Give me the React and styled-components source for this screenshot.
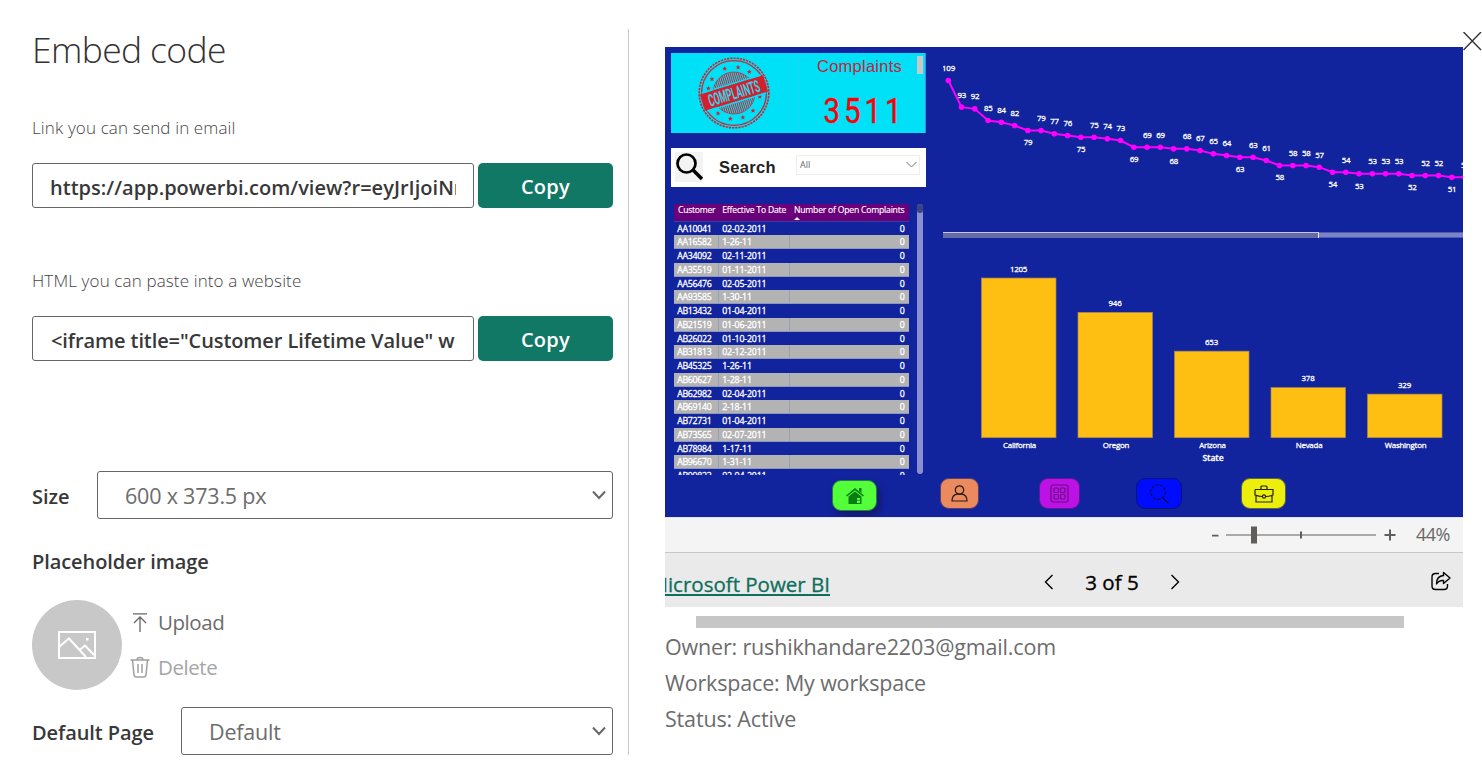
import React from 'react';
import styled, { createGlobalStyle } from 'styled-components';

const UI = '"Open Sans", "Noto Sans", sans-serif';

const GlobalStyle = createGlobalStyle`
  * { box-sizing: border-box; }
  body {
    margin: 0;
    background: #fff;
    font-family: ${UI};
    overflow: hidden;
  }
`;

/* ---------- dialog ---------- */

const Dialog = styled.div`
  position: relative;
  display: flex;
  width: 1482px;
  height: 762px;
  overflow: hidden;
  background: #fff;
`;

const Settings = styled.section`
  display: flex;
  flex-direction: column;
  width: 629px;
  height: 726px;
  margin-top: 29px;
  padding: 0 15px 0 32px;
  border-right: 1px solid #c8c8c8;
`;

const Title = styled.h1`
  margin: 0;
  height: 42px;
  font-size: 35.5px;
  line-height: 40px;
  font-weight: 300;
  letter-spacing: -0.65px;
  color: #333;
`;

const Caption = styled.div`
  height: 24px;
  margin-top: ${(p) => p.$top}px;
  font-size: 17px;
  line-height: 24px;
  font-weight: 300;
  letter-spacing: 0.13px;
  color: #444;
`;

const CopyRow = styled.div`
  display: flex;
  gap: 4px;
  height: 45px;
  margin-top: 23px;
`;

const CodeBox = styled.div`
  width: 442px;
  border: 1px solid #666;
  border-radius: 3px;
  padding: 0 17px;
`;

const CodeText = styled.div`
  overflow: hidden;
  white-space: pre;
  padding-left: ${(p) => p.$indent || 0}px;
  font-size: 20px;
  line-height: 45px;
  padding-top: 1px;
  height: 43px;
  font-weight: 600;
  letter-spacing: ${(p) => p.$track}px;
  color: #383838;
`;

const CopyButton = styled.button`
  width: 135px;
  border: 0;
  border-radius: 5px;
  padding: 2px 0 0 0;
  background: #117865;
  color: #fff;
  font: 600 20px/43px ${UI};
  letter-spacing: 0.3px;
`;

const FieldRow = styled.div`
  display: flex;
  align-items: center;
  justify-content: space-between;
  height: 48px;
  margin-top: ${(p) => p.$top}px;
`;

const Label = styled.div`
  font-size: 20px;
  line-height: 28px;
  font-weight: 600;
  letter-spacing: -0.08px;
  color: #383838;
  padding-top: ${(p) => p.$top || 0}px;
`;

const Select = styled.div`
  display: flex;
  align-items: center;
  justify-content: space-between;
  width: ${(p) => p.$width}px;
  height: 48px;
  padding: 2px 5px 0 27px;
  border: 1px solid #666;
  border-radius: 3px;
  font-size: 21.5px;
  letter-spacing: -0.2px;
  color: #6c6c6c;
  line-height: 46px;
`;

const ImageRow = styled.div`
  display: flex;
  height: 90px;
  margin-top: 24px;
`;

const Avatar = styled.div`
  display: grid;
  place-items: center;
  width: 90px;
  height: 90px;
  border-radius: 50%;
  background: #c8c8c8;
`;

const Actions = styled.div`
  display: flex;
  flex-direction: column;
  gap: 17px;
  padding: 8px 0 0 8px;
`;

const Action = styled.div`
  display: flex;
  align-items: center;
  gap: 8px;
  height: 28px;
  font-size: 20.5px;
  line-height: 28px;
  letter-spacing: -0.45px;
  color: ${(p) => (p.$disabled ? '#a6a6a6' : '#6c6c6c')};
`;

/* ---------- preview ---------- */

const Preview = styled.section`
  width: 798px;
  margin: 47px 0 0 36px;
`;

const Close = styled.svg`
  position: absolute;
  left: 1463px;
  top: 32px;
`;

const Report = styled.div`
  width: 798px;
  height: 470px;
  background: #12239e;
  overflow: hidden;
`;

const ReportBody = styled.div`
  display: flex;
  height: 428px;
`;

const ReportLeft = styled.div`
  display: flex;
  flex-direction: column;
  width: 261px;
  padding: 6px 0 0 6px;
`;

const ComplaintsCard = styled.div`
  display: flex;
  height: 80px;
  background: #00e0f7;
  border-right: 1px solid #4a86d8;
`;

const StampCell = styled.div`
  width: 128px;
  padding: 2px 0 0 25px;
  border-right: 1px solid #22d3f5;
`;

const Count = styled.div`
  width: 126px;
  text-align: center;
`;

const CountTitle = styled.div`
  display: flex;
  justify-content: space-between;
  height: 27px;
  padding: 3px 2px 0 18px;
  font: 16.5px/21px "Liberation Sans", Arial, sans-serif;
  letter-spacing: 0.25px;
  color: #c4243c;
`;

const CountThumb = styled.span`
  width: 6px;
  height: 18px;
  background: #c8c8c8;
`;

const CountValue = styled.div`
  padding-left: 6px;
  font: 34.5px/62px Roboto, sans-serif;
  letter-spacing: 4.7px;
  color: #fb0007;
  -webkit-text-stroke: 0.4px #fb0007;
  transform: scaleX(0.85);
`;

const SearchCard = styled.div`
  display: flex;
  align-items: center;
  height: 39px;
  margin-top: 14.5px;
  padding: 0 6px 0 4px;
  background: #fff;
`;

const GlassTile = styled.div`
  width: 28px;
  height: 30px;
  background: #f3f3f3;
`;

const SearchLabel = styled.div`
  width: 93px;
  padding-left: 16px;
  font: bold 16.5px/24px "Liberation Sans", Arial, sans-serif;
  letter-spacing: 0.3px;
  color: #222;
`;

const Slicer = styled.div`
  display: flex;
  align-items: center;
  justify-content: space-between;
  width: 124px;
  height: 20px;
  margin-top: -5px;
  padding: 0 2px 0 3px;
  border: 1px solid #eee;
  font-size: 9px;
  color: #666;
`;

const TableArea = styled.div`
  display: flex;
  justify-content: space-between;
  height: 271px;
  margin-top: 17px;
  padding: 0 3px 0 3px;
`;

const Table = styled.div`
  width: 235px;
  height: 271px;
  overflow: hidden;
`;

const gridColumns = '45px 71px 119px';

const HeaderRow = styled.div`
  display: grid;
  grid-template-columns: ${gridColumns};
  height: 18px;
  background: #6b007b;
  border-bottom: 1px solid #34409f;
  font-size: 8.6px;
  line-height: 12.5px;
  color: #fff;
  -webkit-text-stroke: 0.15px #fff;
  white-space: nowrap;
`;

const HeaderCell = styled.div`
  position: relative;
  padding-left: ${(p) => p.$indent}px;
  letter-spacing: ${(p) => p.$track}px;
`;

const SortMark = styled.svg`
  position: absolute;
  left: 4px;
  top: 13px;
`;

const DataRow = styled.div`
  display: grid;
  grid-template-columns: ${gridColumns};
  height: 13.75px;
  font-size: 8.8px;
  line-height: 15px;
  letter-spacing: -0.17px;
  color: #fff;
  -webkit-text-stroke: 0.3px #fff;

  &:nth-child(odd) {
    background: #b3b3b3;
    border-bottom: 1px solid #8e97c0;
  }
`;

const Cell = styled.div`
  height: 12.75px;
  padding: 0 4.5px 0 3.2px;
  text-align: ${(p) => (p.$right ? 'right' : 'left')};
  letter-spacing: ${(p) => (p.$tight ? '-0.28px' : 'inherit')};

  ${DataRow}:nth-child(odd) &:not(:last-child) {
    border-right: 1px solid #9a9fb8;
  }
`;

const TableTrack = styled.div`
  width: 6px;
  height: 270px;
  border-radius: 3px;
  background: #8890cf;
`;

const TableThumb = styled.div`
  height: 9px;
  border-radius: 3px;
  background: #3b4385;
`;

const ReportRight = styled.div`
  display: flex;
  flex-direction: column;
  width: 537px;
  padding-left: 17px;
`;

const ChartScroll = styled.div`
  display: flex;
  height: 6px;
`;

const ChartThumb = styled.div`
  width: 376px;
  background: #666ba6;
  border-top: 1px solid #c3c6e4;
  border-right: 1px solid #e8e8f4;
`;

const ChartTrack = styled.div`
  flex: 1;
  background: #7c84c8;
  border-top: 1px solid #4f5ab4;
  border-bottom: 1px solid #4f5ab4;
`;

const NavRow = styled.div`
  display: flex;
  align-items: flex-start;
  padding: 3px 0 0 167px;
`;

const NavButton = styled.div`
  display: grid;
  place-items: center;
  width: ${(p) => p.$width}px;
  height: 31px;
  margin-left: ${(p) => p.$gap || 0}px;
  margin-top: ${(p) => p.$drop || 0}px;
  border-radius: 9px;
  border: 1px solid ${(p) => p.$edge};
  background: ${(p) => p.$fill};
  box-shadow: ${(p) => (p.$raised ? '3px 4px 6px rgba(20, 20, 60, 0.6)' : 'none')};
`;

const ZoomBar = styled.div`
  display: flex;
  align-items: center;
  justify-content: flex-end;
  height: 36px;
  padding-right: 13px;
  background: #f4f4f4;
  border-top: 1px solid #e4e4ee;
  border-bottom: 1px solid #c8c8c8;
  font-size: 18px;
  color: #6a6866;
`;

const ZoomPercent = styled.span`
  margin: -2px 0 0 18px;
  letter-spacing: -0.45px;
`;

const PageBar = styled.div`
  display: flex;
  align-items: center;
  height: 54px;
  overflow: hidden;
  background: #eaeaea;
  color: #000;
  font-size: 20.5px;
`;

const Brand = styled.a`
  width: 165px;
  height: 34px;
  margin-top: 11px;
  display: flex;
  justify-content: flex-end;
  white-space: nowrap;
  color: #0f6e5d;
  -webkit-text-stroke: 0.3px #0f6e5d;
  line-height: 30px;
  text-decoration: underline;
  text-decoration-thickness: 2px;
  text-underline-offset: 2px;
`;

const Pager = styled.div`
  display: flex;
  align-items: center;
  justify-content: space-between;
  width: 138px;
  margin-left: 213px;
  margin-top: 3px;
`;

const PageCount = styled.span`
  -webkit-text-stroke: 0.35px #000;
  letter-spacing: 0;
`;

const Share = styled.svg`
  margin: 2px 0 0 250px;
`;

const PreviewScroll = styled.div`
  width: 708px;
  height: 12px;
  margin: 9px 0 0 31px;
  background: #c6c6c6;
`;

const Facts = styled.div`
  margin-top: 1px;
`;

const Fact = styled.div`
  height: 36px;
  font-size: 21.5px;
  line-height: 36px;
  letter-spacing: -0.17px;
  color: #6c6c6c;
`;

/* ---------- data ---------- */

const rows = [
  ['AA10041', '02-02-2011'], ['AA16582', '1-26-11'], ['AA34092', '02-11-2011'],
  ['AA35519', '01-11-2011'], ['AA56476', '02-05-2011'], ['AA93585', '1-30-11'],
  ['AB13432', '01-04-2011'], ['AB21519', '01-06-2011'], ['AB26022', '01-10-2011'],
  ['AB31813', '02-12-2011'], ['AB45325', '1-26-11'], ['AB60627', '1-28-11'],
  ['AB62982', '02-04-2011'], ['AB69140', '2-18-11'], ['AB72731', '01-04-2011'],
  ['AB73565', '02-07-2011'], ['AB78984', '1-17-11'], ['AB96670', '1-31-11'],
  ['AB99823', '02-04-2011'],
];

const trend = [109, 93, 92, 85, 84, 82, 79, 79, 77, 76, 75, 75, 74, 73, 69, 69, 69, 68, 68, 67,
  65, 64, 63, 63, 61, 58, 58, 58, 57, 54, 54, 53, 53, 53, 53, 52, 52, 52, 51, 51];
const labelsBelow = [6, 10, 14, 17, 22, 25, 29, 31, 35, 38];

const states = [['California', 1205], ['Oregon', 946], ['Arizona', 653], ['Nevada', 378], ['Washington', 329]];

/* ---------- drawings ---------- */

const ChartText = styled.text`
  font-family: ${UI};
  font-size: 7.9px;
  letter-spacing: -0.22px;
  text-anchor: middle;
  fill: #fff;
  stroke: #fff;
  stroke-width: 0.3px;
`;

const AxisTitle = styled(ChartText)`
  font-size: 8.5px;
  font-weight: 600;
  letter-spacing: 0;
`;

function Chevron() {
  return (
    <svg width="16" height="10" viewBox="0 0 16 10" fill="none">
      <path d="M2 .5 8 7l6-6.500" stroke="#666" strokeWidth="2" />
    </svg>
  );
}

function star(cx, cy, r) {
  return Array.from({ length: 10 }, (_, i) => {
    const a = (Math.PI / 5) * i - Math.PI / 2;
    const k = i % 2 ? r * 0.42 : r;
    return `${cx + k * Math.cos(a)},${cy + k * Math.sin(a)}`;
  }).join(' ');
}

function Stamp() {
  const red = '#d4202e';
  const angles = [-148, -111, -81, -54, 8, 43, 70, 98, 128, 190];
  return (
    <svg width="76" height="76" viewBox="-38 -38 76 76">
      <circle r="34.8" fill="none" stroke={red} strokeWidth="1.6" strokeDasharray="2.2 1" />
      <circle r="32.4" fill="none" stroke={red} strokeWidth="1.3" />
      {angles.map((a) => (
        <polygon key={a} fill={red} points={star(26 * Math.cos((a * Math.PI) / 180), 26 * Math.sin((a * Math.PI) / 180), 2.6)} />
      ))}
      <g transform="rotate(-17)">
        <circle r="21" fill="none" stroke={red} strokeWidth="0.6" />
        {Array.from({ length: 21 }, (_, i) => {
          const x = -20 + i * 2;
          const h = Math.sqrt(441 - x * x);
          return <line key={x} x1={x} x2={x} y1={-h} y2={h} stroke={red} strokeWidth="0.9" />;
        })}
        <path d="M-33-8.500H33V8.500H-33Z" fill={red} />
        <path d="M-31-9.500H31M-31 9.500H31" stroke="#00e0f7" strokeWidth="1.300" />
        <text x="-26.500" y="6.200" fontFamily="Roboto, sans-serif" fontWeight="700" fontSize="17" fill="#2fd5ea" textLength="53" lengthAdjust="spacingAndGlyphs">COMPLAINTS</text>
      </g>
    </svg>
  );
}

function TrendChart() {
  const px = (i) => 5.3 + i * 13.25;
  const py = (v) => 33.5 + (109 - v) * 1.667;
  return (
    <svg width="520" height="185" viewBox="0 0 520 185">
      <polyline fill="none" stroke="#f0f" strokeWidth="2" points={trend.map((v, i) => `${px(i)},${py(v)}`).join(' ')} />
      {trend.map((v, i) => (
        <g key={i}>
          <circle cx={px(i)} cy={py(v)} r="2.800" fill="#f0f" />
          <ChartText x={px(i) + 0.2} y={py(v) + (labelsBelow.includes(i) ? 14.8 : -9.4)}>{v}</ChartText>
        </g>
      ))}
    </svg>
  );
}

function StateChart() {
  return (
    <svg width="520" height="237" viewBox="0 191 520 237">
      {states.map(([name, v], i) => {
        const x = 38.5 + i * 96.5;
        const h = v * 0.1325;
        return (
          <g key={name}>
            <rect x={x} y={390.7 - h} width="74.500" height={h} fill="#ffbe12" stroke="#a5874f" strokeWidth="0.700" />
            <ChartText x={x + 37} y={384.5 - h}>{v}</ChartText>
            <ChartText x={x + 38} y="401">{name}</ChartText>
          </g>
        );
      })}
      <AxisTitle x="270" y="413.500">State</AxisTitle>
    </svg>
  );
}

export default function App() {
  return (
    <>
      <GlobalStyle />
      <Dialog>
        <Settings>
          <Title>Embed code</Title>
          <Caption $top={45}>Link you can send in email</Caption>
          <CopyRow>
            <CodeBox><CodeText $track={0.03}>https://app.powerbi.com/view?r=eyJrIjoiNm</CodeText></CodeBox>
            <CopyButton>Copy</CopyButton>
          </CopyRow>
          <Caption $top={61}>HTML you can paste into a website</Caption>
          <CopyRow>
            <CodeBox><CodeText $track={-0.09} $indent={1}>{'<iframe title="Customer Lifetime Value" w'}</CodeText></CodeBox>
            <CopyButton>Copy</CopyButton>
          </CopyRow>
          <FieldRow $top={110}>
            <Label $top={3}>Size</Label>
            <Select $width={516}>600 x 373.5 px<Chevron /></Select>
          </FieldRow>
          <Label $top={29}>Placeholder image</Label>
          <ImageRow>
            <Avatar>
              <svg width="38" height="28" viewBox="0 0 38 28" fill="none" stroke="#fff" strokeWidth="2">
                <rect x="1" y="1" width="36" height="26" />
                <path d="M1 16 11 7.500 28 26M21.500 19 27 14.500 36 24" />
                <rect x="28" y="7" width="2.500" height="2.500" fill="#fff" stroke="none" />
              </svg>
            </Avatar>
            <Actions>
              <Action>
                <svg width="20" height="20" viewBox="0 0 20 20" fill="none" stroke="#666" strokeWidth="1.300">
                  <path d="M3 1.800H17M10 20V5M4 11 10 5l6 6" />
                </svg>
                Upload
              </Action>
              <Action $disabled>
                <svg width="20" height="22" viewBox="0 0 20 22" fill="none" stroke="#a0a0a0" strokeWidth="1.500">
                  <path d="M0.500 4H19.500M7 4c0-3.500 6-3.500 6 0M2.500 4 4 19q.2 2 2 2h8q1.800 0 2-2L17.500 4M8 8v9M12 8v9" />
                </svg>
                Delete
              </Action>
            </Actions>
          </ImageRow>
          <FieldRow $top={17}>
            <Label $top={3}>Default Page</Label>
            <Select $width={432}>Default<Chevron /></Select>
          </FieldRow>
        </Settings>

        <Preview>
          <Report>
            <ReportBody>
              <ReportLeft>
                <ComplaintsCard>
                  <StampCell><Stamp /></StampCell>
                  <Count>
                    <CountTitle>Complaints<CountThumb /></CountTitle>
                    <CountValue>3511</CountValue>
                  </Count>
                </ComplaintsCard>
                <SearchCard>
                  <GlassTile>
                    <svg width="28" height="30" viewBox="0 0 28 30" fill="none" stroke="#000">
                      <circle cx="11.500" cy="11.500" r="9" strokeWidth="2.700" />
                      <path d="M17.500 17.500 27 27" strokeWidth="3.500" />
                    </svg>
                  </GlassTile>
                  <SearchLabel>Search</SearchLabel>
                  <Slicer>
                    All
                    <svg width="11" height="7" viewBox="0 0 11 7" fill="none" stroke="#777"><path d="M.5 1 5.500 6l5-5" /></svg>
                  </Slicer>
                </SearchCard>
                <TableArea>
                  <Table>
                    <HeaderRow>
                      <HeaderCell $indent={4} $track={-0.25}>Customer</HeaderCell>
                      <HeaderCell $indent={3.3} $track={-0.2}>Effective To Date</HeaderCell>
                      <HeaderCell $indent={4} $track={-0.2}>
                        Number of Open Complaints
                        <SortMark width="6" height="3" viewBox="0 0 6 3"><path d="M0 3 3 0l3 3Z" fill="#fff" /></SortMark>
                      </HeaderCell>
                    </HeaderRow>
                    {rows.map(([customer, date]) => (
                      <DataRow key={customer}>
                        <Cell $tight>{customer}</Cell>
                        <Cell>{date}</Cell>
                        <Cell $right>0</Cell>
                      </DataRow>
                    ))}
                  </Table>
                  <TableTrack><TableThumb /></TableTrack>
                </TableArea>
              </ReportLeft>
              <ReportRight>
                <TrendChart />
                <ChartScroll><ChartThumb /><ChartTrack /></ChartScroll>
                <StateChart />
              </ReportRight>
            </ReportBody>
            <NavRow>
              <NavButton $width={45} $drop={1.5} $fill="#52ff38" $edge="#2a7a4a" $raised>
                <svg width="18" height="17" viewBox="0 0 18 17">
                  <path d="M0 8.500 9 1l9 7.500-1 1L9 3.200 1 9.500Z" fill="#0a7d12" />
                  <path d="M2.500 9.500 9 4.500l6.500 5V17H2.500ZM13 1h2.500v5L13 4Z" fill="#0a7d12" />
                  <path d="M11 11h3v5h-3Z" fill="#52ff38" />
                  <path d="M11 13.300h3" stroke="#0a7d12" strokeWidth=".7" />
                </svg>
              </NavButton>
              <NavButton $width={39} $gap={63} $fill="#ea8a5e" $edge="#5a4068">
                <svg width="17" height="17" viewBox="0 0 17 17" fill="none" stroke="#2a1a14" strokeWidth="1.200">
                  <circle cx="8.500" cy="5" r="4.200" />
                  <path d="M1 16q0-6 5-6.800h5q5 .8 5 6.800Z" />
                </svg>
              </NavButton>
              <NavButton $width={41} $gap={59.5} $fill="#bd12e6" $edge="#5a1a98">
                <svg width="19" height="19" viewBox="0 0 19 19" fill="none" stroke="#6c0a86" strokeWidth="1.200">
                  <rect x="1" y="1" width="17" height="17" rx="2" />
                  <rect x="4" y="4" width="4.500" height="4.500" rx="1" />
                  <rect x="10.500" y="4" width="4.500" height="4.500" rx="1" />
                  <rect x="4" y="10.500" width="4.500" height="4.500" rx="1" />
                  <rect x="10.500" y="10.500" width="4.500" height="4.500" rx="1" />
                </svg>
              </NavButton>
              <NavButton $width={46} $gap={56.5} $fill="#000cff" $edge="#0a1470">
                <svg width="19" height="20" viewBox="0 0 19 20" fill="none" stroke="#08084a" strokeWidth="1.100">
                  <circle cx="8" cy="8" r="7.300" strokeDasharray="3 1.500" />
                  <path d="M13 14l5.500 5.500" />
                </svg>
              </NavButton>
              <NavButton $width={44.5} $gap={59.3} $fill="#ecee0c" $edge="#5d6440">
                <svg width="20" height="18" viewBox="0 0 20 18" fill="none" stroke="#22220a" strokeWidth="1.200">
                  <path d="M1 4.500H19V10Q15 11.500 12 11.500M8 11.500Q5 11.500 1 10V4.500M2 10.500V17H18V10.500M7 4.500V2q0-1 1-1h4q1 0 1 1v2.500" />
                  <circle cx="10" cy="11.500" r="1.600" />
                </svg>
              </NavButton>
            </NavRow>
          </Report>
          <ZoomBar>
            <svg width="186" height="20" viewBox="0 0 186 20" fill="#605e5c">
              <path d="M0 9.800h6.500v1.800H0ZM14 9.500H164v1H14ZM39 1.500h6v17h-6ZM88 6.500h2v7h-2ZM172.500 9h11v2h-11ZM177 4.500h2v11h-2Z" />
            </svg>
            <ZoomPercent>44%</ZoomPercent>
          </ZoomBar>
          <PageBar>
            <Brand>Microsoft Power BI</Brand>
            <Pager>
              <svg width="12" height="16" viewBox="0 0 12 16" fill="none" stroke="#000" strokeWidth="1.400"><path d="M9.500 1 2.500 8l7 7" /></svg>
              <PageCount>3 of 5</PageCount>
              <svg width="12" height="16" viewBox="0 0 12 16" fill="none" stroke="#000" strokeWidth="1.400"><path d="M2.500 1l7 7-7 7" /></svg>
            </Pager>
            <Share width="20" height="20" viewBox="0 0 20 20" fill="none" stroke="#000" strokeWidth="1.400" strokeLinejoin="round">
              <path d="M8 2.500H4.500q-3.500 0-3.500 3.500V15q0 3.500 3.500 3.500h8.500q3.500 0 3.500-3.500V13" />
              <path d="M12.500 1.500 19 7l-6.500 5.500V9.500Q8 9 5.500 13 5.500 5 12.500 4.500Z" />
            </Share>
          </PageBar>
          <PreviewScroll />
          <Facts>
            <Fact>Owner: rushikhandare2203@gmail.com</Fact>
            <Fact>Workspace: My workspace</Fact>
            <Fact>Status: Active</Fact>
          </Facts>
        </Preview>

        <Close width="19" height="19" viewBox="0 0 19 19" fill="none" stroke="#333" strokeWidth="1.400">
          <path d="M.5 0l17.500 18M18 0l-17.500 18" />
        </Close>
      </Dialog>
    </>
  );
}
